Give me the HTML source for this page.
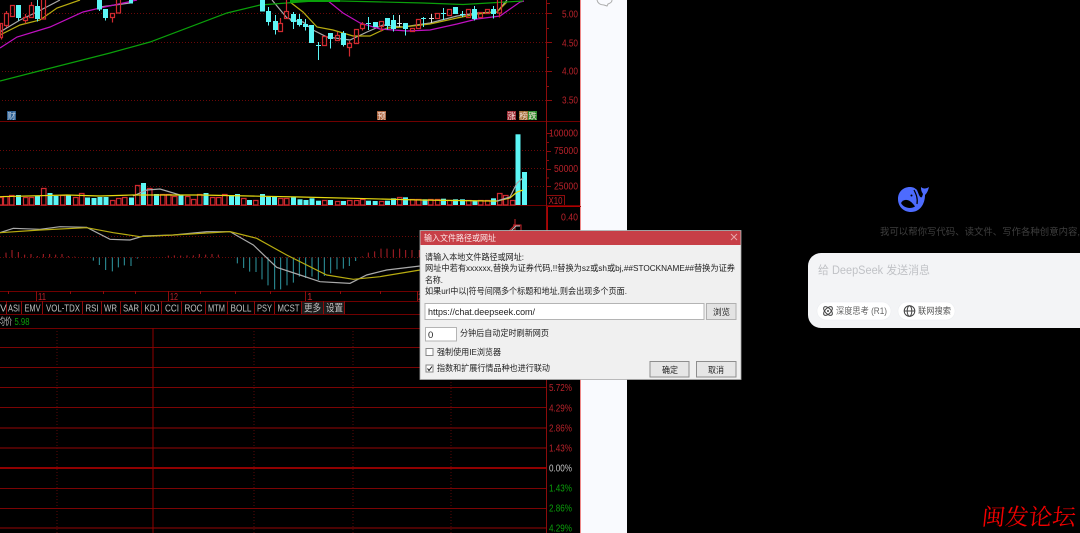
<!DOCTYPE html>
<html lang="zh">
<head>
<meta charset="utf-8">
<title>输入文件路径或网址</title>
<style>
html,body{margin:0;padding:0;background:#000;width:1080px;height:533px;overflow:hidden}
svg{display:block;position:absolute;left:0;top:0;filter:blur(.3px)}
text{font-family:"Liberation Sans","Noto Sans CJK SC",sans-serif}
.ns *{vector-effect:non-scaling-stroke}
.ax{fill:#b8222a;font-size:10px}
.tab{fill:#c0c0c0;font-size:10px}
.dlg{fill:#222;font-size:8.6px}
</style>
</head>
<body>
<svg width="1080" height="533" viewBox="0 0 1080 533" xmlns="http://www.w3.org/2000/svg">
<rect width="1080" height="533" fill="#000"/>
<rect x="581" width="46" height="533" fill="#f9fafe"/>
<path d="M597 0c1 4 4 5 7 5l3 1 1-2c3-1 4-2 4-4" fill="none" stroke="#aaa" stroke-width="1"/>

<!-- grid -->
<g fill="none" stroke="#6a0808" stroke-width="1" stroke-dasharray="1 2">
<path d="M2 13.5H546M2 42.5H546M2 71.5H546M2 100.5H546M0 150.5H546M0 168.5H546M0 186.5H546M0 236.5H546M0 257.5H546"/>
<path d="M57 328V533M254 328V533M353 328V533M451 328V533" stroke="#5a0808"/>
</g>
<g fill="none" stroke="#700000" stroke-width="1">
<path d="M0 121.5H581M0 205.5H581M0 291.5H546M0 301.5H546M0 314.5H581M0 328.5H546"/>
<path d="M0 347.5H546M0 367.5H546M0 387.5H546M0 407.5H546M0 488.5H546M0 508.5H546" stroke="#7a0404"/>
<path d="M0 428H546M0 448H546M0 528H546" stroke="#640404" stroke-width="1.4"/>
<path d="M0 468H546" stroke="#c00000" stroke-width="1.4"/>
<path d="M153 328V533" stroke="#900000"/>
<path d="M546.5 0V533" stroke="#8c0c0c"/>
<path d="M580.5 0V533" stroke="#e88"/>
<path d="M547.5 206.5H581M547.5 206.5V291" stroke="#b00000"/>
<path d="M547 195.5H564.5V205" stroke="#8c0c0c"/>
<path d="M546 3.5h4M546 13.5h6M546 28.5h3M546 42.5h6M546 57.5h3M546 71.5h6M546 86.5h3M546 100.5h6M546 133.5h5M546 142.5h3M546 151.5h5M546 160.5h3M546 169.5h5M546 178h3M546 186.5h5" stroke="#8c0c0c"/>
<path d="M36.5 291V301M168.5 291V301M305.5 291V301M417.5 291V301M8.5 291v3M70.5 291v3M103.5 291v3M135.5 291v3M200.5 291v3M235.5 291v3M270.5 291v3M340.5 291v3M380.5 291v3" stroke="#8c0c0c"/>
</g>

<!-- moving averages on price chart -->
<g fill="none" stroke-width="1.2">
<path d="M0 32L20 20 37 12 60 0M100 7L130 3M272 0L287 18 300 22M290 20L303 22 313 30 327 37 350 40 367 32 383 25 403 27 430 23 457 16 477 13 497 12 507 0" stroke="#aaa"/>
<path d="M0 35L20 25 40 20 57 8 80 0M290 2L303 12 317 27 333 30 353 36 370 36 387 28 403 27 430 24 457 18 477 14 497 12 507 2" stroke="#b8ac10"/>
<path d="M0 48L17 37 50 27 83 12 100 8 137 0M327 0L343 13 360 23 380 29 407 31 430 30 457 24 477 19 500 16 510 9 520 2 524 1" stroke="#c010c0"/>
<path d="M0 81L43 70 110 53 150 42 227 13 260 5 300 2 320 .5 423 3 463 4.500 523 1" stroke="#0aa00a"/>
<path d="M290 1H340" stroke="#0aa00a" stroke-width="2"/>
</g>

<!-- candles: red -->
<g fill="none" stroke="#d02a30" stroke-width="1.2">
<path d="M.5 23.5h2v14h-2zM1.5 37.5v2M4.5 13.5h4v12h-4zM6.5 11v2.500M6.5 25.5v2M10.5 5.5h4v11h-4zM23.5 17.5h4v3h-4zM25.5 14v3.500M25.5 20.5v3M29.5 5.5h4v12h-4zM31.5 2v3.500M41.5 -1h4v20h-4zM110.5 13.5h4v4h-4zM112.5 17.5v5M116.5 -1h4v14h-4zM278.5 23.5h4v8h-4zM280.5 18v5.500M284.5 11.5h4v7h-4zM286.5 0v11.500M322.5 36.5h4v9h-4zM335.5 35.5h4v5h-4zM337.5 32v3.500M347.5 43.5h4v4h-4zM349.5 41v2.500M349.5 47.5v9M354.5 29.5h4v14h-4zM360.5 24.5h4v4h-4zM362.5 22v2.500M362.5 28.5v2M379.5 21.5h4v5h-4zM381.5 26.5v5M410.5 28.5h4v3h-4zM416.5 19.5h4v9h-4zM435.5 13.5h4v5h-4zM447.5 9.5h4v6h-4zM466.5 9.5h4v8h-4zM478.5 12.5h4v5h-4zM485.5 9.5h4v4h-4zM497.5 -1h4v14h-4zM499.5 13.5v4"/>
</g>
<!-- candles: cyan -->
<g fill="#5cf6f6" stroke="#5cf6f6" stroke-width="1">
<path d="M16.5 5.5h4v12h-4zM18.5 17.5v3M35.5 6.5h4v12h-4zM37.5 0v6.500M37.5 18.5v3M97.5 -1h4v10h-4zM99.5 9v2M103.5 9.5h4v8h-4zM105.5 17.5v3M129.5 -1h3v4h-3zM260.5 -1h4v12h-4zM266.5 11.5h4v10h-4zM268.5 7v4.500M268.5 21.5v4M273.5 21.5h4v8h-4zM275.5 15v6.500M275.5 29.5v5M291.5 14.5h4v7h-4zM293.5 12v2.500M293.5 21.5v7.500M297.5 19.5h4v5h-4zM299.5 14v5.500M299.5 24.5v2M303.5 24.5h4v2h-4zM305.5 19v5.500M305.5 26.5v4M309.5 25.5h4v17h-4zM318.5 42v18M316 45.5h5M328.5 33.5h4v5h-4zM330.5 38.5v10M341.5 33.5h4v11h-4zM343.5 31v2.500M343.5 44.5v2M368.5 17v13M366 23.5h5M373.5 22.5h4v4h-4zM385.5 18.5h4v7h-4zM387.5 25.5v4M391.5 20.5h4v8h-4zM393.5 15v5.500M393.5 28.5v3M403.5 23.5h4v5h-4zM405.5 28.5v7M423.5 17v10M421 18.5h5M443.5 8v12M441 13.5h5M453.5 7.5h4v6h-4zM462.5 11v6M460 14.5h5M472.5 9.5h4v9h-4zM474.5 6v3.500M474.5 18.5v2M491.5 9.5h4v4h-4zM493.5 6v3.500M493.5 13.5v5"/>
</g>
<path d="M399.5 15v12M431.5 14v9M397 23.5h5M429 18.5h5" stroke="#ddd" fill="none"/>

<!-- event markers -->
<g font-size="8.5" text-anchor="middle" fill="#f4e0d8">
<rect x="7" y="111" width="9" height="9" fill="#2d5f92"/><text x="11.5" y="119" fill="#bcd">财</text>
<rect x="377" y="111" width="9" height="9" fill="#a8623c"/><text x="381.5" y="119">预</text>
<rect x="507" y="111" width="9" height="9" fill="#9c2a34"/><text x="511.5" y="119">涨</text>
<rect x="519" y="111" width="9" height="9" fill="#a06a30"/><text x="523.5" y="119">榜</text>
<rect x="528" y="111" width="9" height="9" fill="#2c8a2c"/><text x="532.5" y="119">跌</text>
</g>

<!-- volume: red hollow -->
<path fill="none" stroke="#d02a30" stroke-width="1.2" d="M-1 197.5h3.500V205h-3.500zM3.5 196.5h4.500V205h-4.500zM9.5 195.5h4.500V205h-4.500zM23.5 197.5h4.500V205h-4.500zM29.5 197.5h4.500V205h-4.500zM41.5 188.5h4.500V205h-4.500zM60.5 195.5h4.500V205h-4.500zM73.5 197.5h4.500V205h-4.500zM79.5 193.5h4.500V205h-4.500zM110.5 200.5h4.500V205h-4.500zM116.5 198.5h4.500V205h-4.500zM122.5 197.5h4.500V205h-4.500zM135.5 185.5h4.500V205h-4.500zM147.5 188.5h4.500V205h-4.500zM160.5 194.5h4.500V205h-4.500zM166.5 194.5h4.500V205h-4.500zM172.5 196.5h4.500V205h-4.500zM185.5 196.5h4.500V205h-4.500zM191.5 199.5h4.500V205h-4.500zM197.5 194.5h4.500V205h-4.500zM210.5 197.5h4.500V205h-4.500zM216.5 197.5h4.500V205h-4.500zM222.5 194.5h4.500V205h-4.500zM241.5 198.5h4.500V205h-4.500zM253.5 200.5h4.500V205h-4.500zM278.5 198.5h4.500V205h-4.500zM284.5 198.5h4.500V205h-4.500zM322.5 200.5h4.500V205h-4.500zM335.5 201.5h4.500V205h-4.500zM347.5 200.5h4.500V205h-4.500zM354.5 200.5h4.500V205h-4.500zM360.5 199.5h4.500V205h-4.500zM379.5 201.5h4.500V205h-4.500zM397.5 197.5h4.500V205h-4.500zM410.5 199.5h4.500V205h-4.500zM416.5 199.5h4.500V205h-4.500zM428.5 199.5h4.500V205h-4.500zM435.5 199.5h4.500V205h-4.500zM447.5 200.5h4.500V205h-4.500zM466.5 200.5h4.500V205h-4.500zM478.5 200.5h4.500V205h-4.500zM485.5 200.5h4.500V205h-4.500zM497.5 193.5h4.500V205h-4.500zM503.5 195.5h4.500V205h-4.500zM510.5 200.5h4.500V205h-4.500z"/>
<!-- volume: cyan -->
<g fill="#5cf6f6">
<rect x="16" y="195" width="5" height="10"/><rect x="35" y="196" width="5" height="9"/><rect x="47.5" y="193" width="5" height="12"/><rect x="53.5" y="196" width="5" height="9"/><rect x="66" y="195" width="5" height="10"/><rect x="85" y="197.5" width="5" height="7.5"/><rect x="91.5" y="198" width="5" height="7"/><rect x="97.5" y="197" width="5" height="8"/><rect x="103.5" y="197" width="5" height="8"/><rect x="129" y="197.5" width="5" height="7.5"/><rect x="141" y="183" width="5" height="22"/><rect x="154" y="194" width="5" height="11"/><rect x="178.5" y="194.5" width="5" height="10.5"/><rect x="203.5" y="193" width="5" height="12"/><rect x="229" y="195" width="5" height="10"/><rect x="235" y="194" width="5" height="11"/><rect x="247" y="200" width="5" height="5"/><rect x="260" y="194" width="5" height="11"/><rect x="266" y="197" width="5" height="8"/><rect x="272" y="197" width="5" height="8"/><rect x="291" y="197.3" width="5" height="7.7"/><rect x="297.5" y="199.3" width="5" height="5.7"/><rect x="303.5" y="200" width="5" height="5"/><rect x="309.5" y="198.3" width="5" height="6.7"/><rect x="316" y="200.7" width="5" height="4.3"/><rect x="328" y="200" width="5" height="5"/><rect x="341" y="201" width="5" height="4"/><rect x="366" y="200.7" width="5" height="4.3"/><rect x="372.7" y="201" width="5" height="4"/><rect x="385" y="200.7" width="5" height="4.3"/><rect x="391" y="198.3" width="5" height="6.7"/><rect x="403" y="197.3" width="5" height="7.7"/><rect x="422.5" y="199.3" width="5" height="5.7"/><rect x="441" y="198.7" width="5" height="6.3"/><rect x="453" y="199.3" width="5" height="5.7"/><rect x="460" y="199.3" width="5" height="5.7"/><rect x="472.5" y="200.7" width="5" height="4.3"/><rect x="491" y="198.3" width="5" height="6.7"/><rect x="515.5" y="134.3" width="5" height="70.7"/><rect x="522" y="172" width="5" height="33"/>
</g>
<g fill="none" stroke-width="1.2">
<path d="M133 196L147 190 160 189 180 195" stroke="#aaa"/>
<path d="M0 196.7L67 195 100 196 133 195 200 195 300 197 420 200 490 201 497 201 510 198 517 192 523 190" stroke="#e6da10"/>
<path d="M497 201L510 197 517 183 523 178" stroke="#aaa"/>
</g>

<!-- MACD -->
<g class="ns" transform="translate(0 180) scale(.33333)" fill="none">
<path stroke="#b02028" stroke-width="1" d="M18 232V218M36 232V210M55 232V216M74 232V224M93 232V222M112 232V228M130 232V222M149 232V222M167 232V224M186 232V222M205 232V228M224 232V230M505 232V227M523 232V226M542 232V227M561 232V226M580 232V226M598 232V222M617 232V224M636 232V222M655 232V224M1087 232V229M1105 232V218M1124 232V214M1143 232V206M1161 232V206M1180 232V208M1199 232V206M1217 232V210M1236 232V210M1258 232V210"/>
<path stroke="#2f9aa4" stroke-width="1" d="M280 232V242M298 232V255M317 232V270M337 232V274M355 232V262M373 232V256M393 232V258M412 232V236M712 232V250M731 232V264M749 232V275M768 232V276M786 232V298M804 232V316M824 232V328M842 232V328M861 232V316M880 232V308M898 232V290M917 232V294M936 232V290M955 232V300M973 232V288M992 232V280M1011 232V268M1030 232V266M1048 232V258M1067 232V243"/>
<path stroke="#aaa" stroke-width="1.2" d="M0 158L40 145 120 148 180 140 260 142 330 178 390 180 430 168 520 165 620 155 690 155 760 195 830 262 900 285 960 305 1050 310 1100 285 1160 270 1260 258"/>
<path stroke="#b8ac10" stroke-width="1.2" d="M0 158L120 150 260 143 340 158 420 170 520 165 690 155 770 175 860 225 980 285 1060 298 1140 290 1260 270"/>
</g>
<path d="M509 231L515 225M515 219V231M513 225H521V231" fill="none" stroke="#c8262c"/>
<path d="M511 231L516 226H520" fill="none" stroke="#bbb"/>

<!-- axis labels -->
<g class="ax">
<text lengthAdjust="spacingAndGlyphs" x="562" y="17.5" textLength="16">5.00</text><text lengthAdjust="spacingAndGlyphs" x="562" y="46.5" textLength="16">4.50</text><text lengthAdjust="spacingAndGlyphs" x="562" y="74.5" textLength="16">4.00</text><text lengthAdjust="spacingAndGlyphs" x="562" y="103.5" textLength="16">3.50</text>
<text lengthAdjust="spacingAndGlyphs" x="549" y="136.5" textLength="29">100000</text><text lengthAdjust="spacingAndGlyphs" x="554" y="154" textLength="24">75000</text><text lengthAdjust="spacingAndGlyphs" x="554" y="172" textLength="24">50000</text><text lengthAdjust="spacingAndGlyphs" x="554" y="189.5" textLength="24">25000</text>
<text lengthAdjust="spacingAndGlyphs" x="548.5" y="204" textLength="14">X10</text><text lengthAdjust="spacingAndGlyphs" x="561" y="220.5" textLength="17">0.40</text>
<text lengthAdjust="spacingAndGlyphs" x="38" y="300" textLength="8">11</text><text lengthAdjust="spacingAndGlyphs" x="170" y="300" textLength="8">12</text><text x="307" y="300">1</text><text x="418" y="300">2</text>
<text lengthAdjust="spacingAndGlyphs" x="549" y="391" textLength="23">5.72%</text><text lengthAdjust="spacingAndGlyphs" x="549" y="411.5" textLength="23">4.29%</text><text lengthAdjust="spacingAndGlyphs" x="549" y="431.5" textLength="23">2.86%</text><text lengthAdjust="spacingAndGlyphs" x="549" y="451.5" textLength="23">1.43%</text>
<text lengthAdjust="spacingAndGlyphs" x="549" y="471.5" textLength="23" style="fill:#c4c4c4">0.00%</text>
<text lengthAdjust="spacingAndGlyphs" x="549" y="491.5" textLength="23" style="fill:#0aa00a">1.43%</text><text lengthAdjust="spacingAndGlyphs" x="549" y="511.5" textLength="23" style="fill:#0aa00a">2.86%</text><text lengthAdjust="spacingAndGlyphs" x="549" y="531.5" textLength="23" style="fill:#0aa00a">4.29%</text>
</g>

<!-- indicator tabs -->
<path d="M6.5 301V314M21.5 301V314M42.5 301V314M82.5 301V314M101.5 301V314M120.5 301V314M141.5 301V314M161.5 301V314M181.5 301V314M205.5 301V314M227.5 301V314M254.5 301V314M274.5 301V314M301.5 301V314M323.5 301V314M344.5 301V314" stroke="#8c0c0c" fill="none"/>
<rect x="302" y="302" width="21" height="12" fill="#1c1c1c"/><rect x="324" y="302" width="20" height="12" fill="#1c1c1c"/>
<g class="tab">
<text x="0" y="311.5">V</text><text lengthAdjust="spacingAndGlyphs" x="8" y="311.5" textLength="12">ASI</text><text lengthAdjust="spacingAndGlyphs" x="24.5" y="311.5" textLength="16">EMV</text><text lengthAdjust="spacingAndGlyphs" x="46" y="311.5" textLength="34">VOL-TDX</text><text lengthAdjust="spacingAndGlyphs" x="85.5" y="311.5" textLength="13">RSI</text><text lengthAdjust="spacingAndGlyphs" x="104" y="311.5" textLength="13">WR</text><text lengthAdjust="spacingAndGlyphs" x="123" y="311.5" textLength="16">SAR</text><text lengthAdjust="spacingAndGlyphs" x="144.5" y="311.5" textLength="15">KDJ</text><text lengthAdjust="spacingAndGlyphs" x="165" y="311.5" textLength="14">CCI</text><text lengthAdjust="spacingAndGlyphs" x="184.5" y="311.5" textLength="18">ROC</text><text lengthAdjust="spacingAndGlyphs" x="208" y="311.5" textLength="17">MTM</text><text lengthAdjust="spacingAndGlyphs" x="230.5" y="311.5" textLength="21">BOLL</text><text lengthAdjust="spacingAndGlyphs" x="257" y="311.5" textLength="15">PSY</text><text lengthAdjust="spacingAndGlyphs" x="277.5" y="311.5" textLength="22">MCST</text><text lengthAdjust="spacingAndGlyphs" x="304" y="311.5" textLength="17">更多</text><text lengthAdjust="spacingAndGlyphs" x="326" y="311.5" textLength="17">设置</text>
<text lengthAdjust="spacingAndGlyphs" x="-2" y="325" textLength="14">均价</text><text lengthAdjust="spacingAndGlyphs" x="14.5" y="325" textLength="15" style="fill:#0aa00a">5.98</text>
</g>

<!-- DeepSeek panel -->
<path fill="#4d6bfe" d="M898 199C898 192 903 187 910 187C913 187 915 188 917 190L919 195C920 197 921 198 922 197L923 194C921 191 921 189 921 187C923 189 926 189 929 187C928 191 927 193 925 195C925 204 920 212 911 212C904 212 898 207 898 199Z"/>
<path fill="#000" d="M901 203C904 198 910 199 915 206.5C911 209 904 208.500 901 203Z"/>
<path fill="none" stroke="#000" stroke-width="1.2" d="M914 190C916 194 918 198 917 204"/>
<circle cx="911.5" cy="195.5" r="1" fill="#000"/>
<text lengthAdjust="spacingAndGlyphs" x="880" y="235" font-size="9.5" fill="#3f3f3f" textLength="200">我可以帮你写代码、读文件、写作各种创意内容,</text>
<rect x="808" y="253" width="290" height="75" rx="13" fill="#f3f4f6"/>
<text lengthAdjust="spacingAndGlyphs" x="818" y="274" font-size="11.500" fill="#c0c2c6" textLength="112">给 DeepSeek 发送消息</text>
<rect x="817" y="302" width="74" height="18" rx="9" fill="#fff" stroke="#eceef1" stroke-width=".6"/>
<rect x="898" y="302" width="57" height="18" rx="9" fill="#fff" stroke="#eceef1" stroke-width=".6"/>
<g fill="none" stroke="#444" stroke-width="1">
<ellipse cx="828" cy="311" rx="5.500" ry="2.800" transform="rotate(45 828 311)"/>
<ellipse cx="828" cy="311" rx="5.500" ry="2.800" transform="rotate(-45 828 311)"/>
<circle cx="909.5" cy="311" r="5.300"/><ellipse cx="909.5" cy="311" rx="2.300" ry="5.300"/><path d="M904.2 311h10.600"/>
</g>
<circle cx="828" cy="311" r="1" fill="#444"/>
<text lengthAdjust="spacingAndGlyphs" x="836" y="314" font-size="9" fill="#666" textLength="51">深度思考 (R1)</text>
<text lengthAdjust="spacingAndGlyphs" x="918" y="314" font-size="9" fill="#555" textLength="33">联网搜索</text>

<!-- dialog -->
<rect x="420" y="230.5" width="321" height="149" fill="#f0f0f0" stroke="#aaa" stroke-width=".8"/>
<rect x="420.5" y="231" width="320" height="14" fill="#c73f47"/>
<text lengthAdjust="spacingAndGlyphs" x="424" y="241" font-size="8.500" fill="#fbe8e8" textLength="72">输入文件路径或网址</text>
<path d="M731 234l6 6M737 234l-6 6" stroke="#e8a6aa" fill="none"/>
<g class="dlg">
<text lengthAdjust="spacingAndGlyphs" x="425" y="260" textLength="99">请输入本地文件路径或网址:</text>
<text lengthAdjust="spacingAndGlyphs" x="425" y="271" textLength="310">网址中若有xxxxxx,替换为证券代码,!!替换为sz或sh或bj,##STOCKNAME##替换为证券</text>
<text lengthAdjust="spacingAndGlyphs" x="425" y="283" textLength="18">名称.</text>
<text lengthAdjust="spacingAndGlyphs" x="425" y="294" textLength="202">如果url中以|符号间隔多个标题和地址,则会出现多个页面.</text>
<text lengthAdjust="spacingAndGlyphs" x="460" y="336" textLength="89">分钟后自动定时刷新网页</text>
<text lengthAdjust="spacingAndGlyphs" x="437" y="355" textLength="64">强制使用IE浏览器</text>
<text lengthAdjust="spacingAndGlyphs" x="437" y="371" textLength="113">指数和扩展行情品种也进行联动</text>
</g>
<rect x="425" y="303.5" width="279" height="16" fill="#fff" stroke="#b4b4b4"/>
<text lengthAdjust="spacingAndGlyphs" x="428" y="315" font-size="9.500" fill="#222" textLength="107">https://chat.deepseek.com/</text>
<rect x="706.5" y="303.5" width="29.5" height="16" fill="#e3e3e3" stroke="#b0b0b0"/>
<text lengthAdjust="spacingAndGlyphs" x="713" y="315" font-size="8.500" fill="#222" textLength="17">浏览</text>
<rect x="425.5" y="327.5" width="31" height="13.5" fill="#fff" stroke="#b4b4b4"/>
<text x="428" y="338" font-size="9.500" fill="#222">0</text>
<rect x="426" y="348.5" width="7" height="7" fill="#fff" stroke="#888"/>
<rect x="426" y="365" width="7" height="7" fill="#fff" stroke="#888"/>
<path d="M427.5 368.5l1.500 2 3-4" fill="none" stroke="#111" stroke-width="1"/>
<rect x="650" y="361.5" width="39" height="15.5" fill="#e6e6e6" stroke="#8e8e8e"/>
<rect x="696.5" y="361.5" width="39.5" height="15.5" fill="#e6e6e6" stroke="#8e8e8e"/>
<text lengthAdjust="spacingAndGlyphs" x="662" y="373" font-size="8.500" fill="#222" textLength="16">确定</text>
<text lengthAdjust="spacingAndGlyphs" x="708" y="373" font-size="8.500" fill="#222" textLength="16">取消</text>

<!-- watermark -->
<text lengthAdjust="spacingAndGlyphs" transform="translate(979 525) skewX(-6)" x="2" y="0" font-size="23" fill="#f00000" textLength="94" style="font-family:'Noto Serif CJK SC',serif">闽发论坛</text>
</svg>
</body>
</html>
